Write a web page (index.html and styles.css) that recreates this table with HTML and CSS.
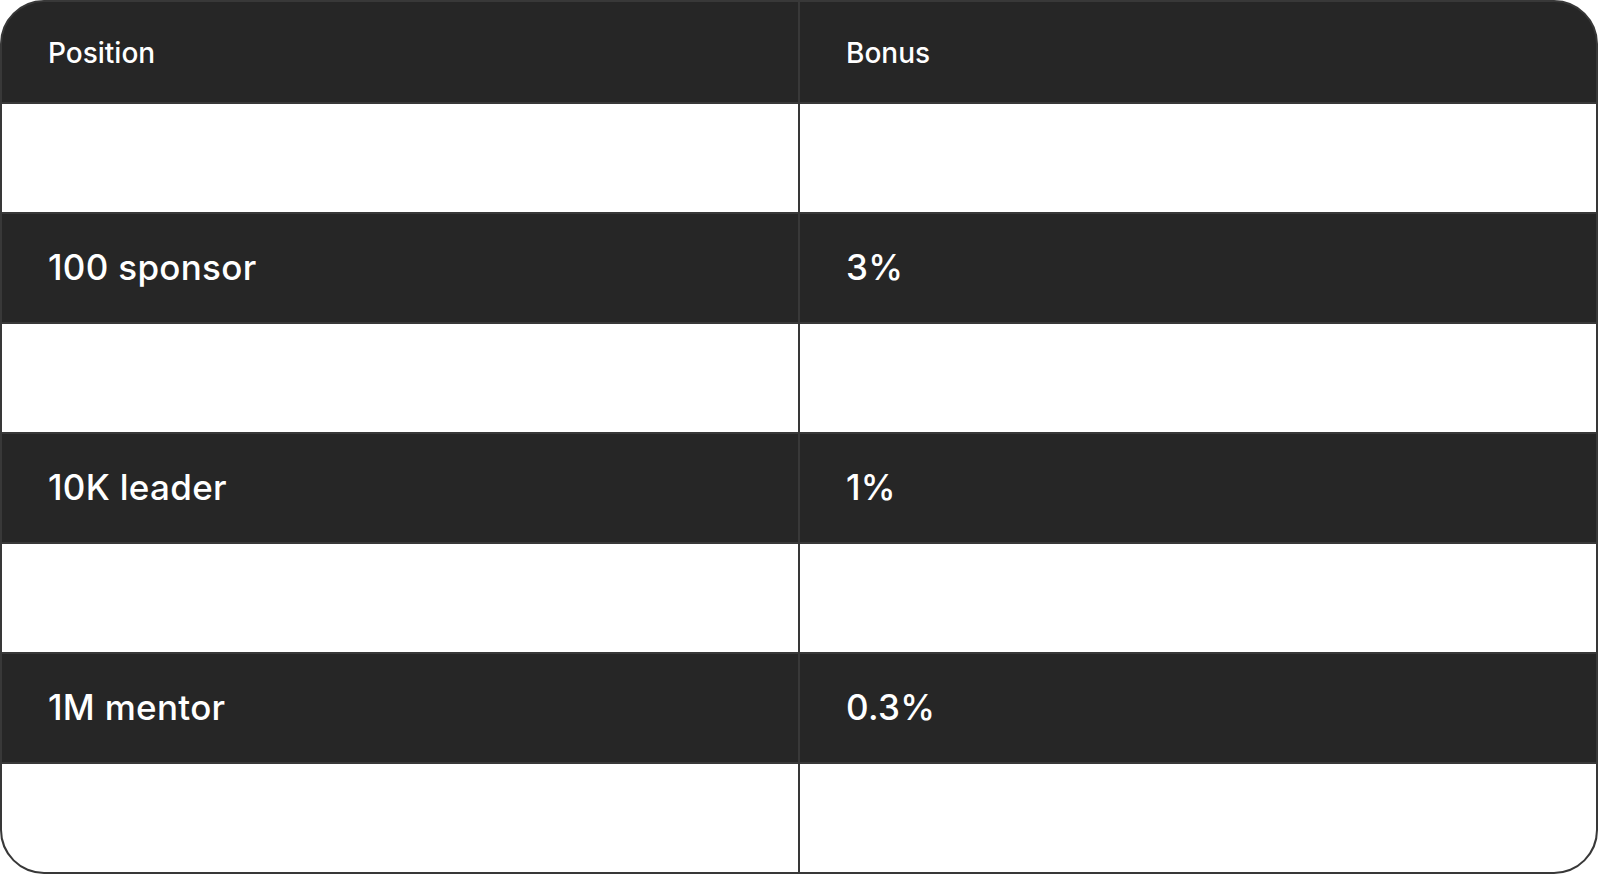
FILE: index.html
```html
<!DOCTYPE html>
<html lang="en">
<head>
<meta charset="utf-8">
<title>Bonus table</title>
<link rel="stylesheet" href="styles.css">
</head>
<body>
<div class="table">
  <div class="row head">
    <div class="cell">Position</div>
    <div class="cell">Bonus</div>
  </div>
  <div class="row light"><div class="cell"></div><div class="cell"></div></div>
  <div class="row dark"><div class="cell">100 sponsor</div><div class="cell">3%</div></div>
  <div class="row light"><div class="cell"></div><div class="cell"></div></div>
  <div class="row dark"><div class="cell">10K leader</div><div class="cell">1%</div></div>
  <div class="row light"><div class="cell"></div><div class="cell"></div></div>
  <div class="row dark"><div class="cell">1M mentor</div><div class="cell">0.3%</div></div>
  <div class="row light"><div class="cell"></div><div class="cell"></div></div>
</div>
</body>
</html>
```
FILE: styles.css
```css
html, body {
  margin: 0;
  padding: 0;
  background: #ffffff;
}
body {
  font-family: Inter, "Noto Sans", sans-serif;
  color: #ffffff;
}
.table {
  width: 1598px;
  height: 874px;
  box-sizing: border-box;
  border: 2px solid #383838;
  border-radius: 44px;
  overflow: hidden;
  display: flex;
  flex-direction: column;
  background: #383838;
  gap: 2px;
}
.row {
  display: grid;
  grid-template-columns: 1fr 1fr;
  gap: 2px;
  height: 108px;
}
.row.head {
  height: 100px;
}
.cell {
  display: flex;
  align-items: center;
  box-sizing: border-box;
  padding-left: 46px;
  padding-bottom: 2px;
  font-weight: 500;
  font-size: 35px;
  letter-spacing: 0.3px;
}
.head .cell {
  background: #262626;
  font-size: 28px;
  letter-spacing: 0;
  padding-bottom: 0;
  padding-top: 1px;
}
.dark .cell {
  background: #262626;
}
.light .cell {
  background: #ffffff;
}
```
